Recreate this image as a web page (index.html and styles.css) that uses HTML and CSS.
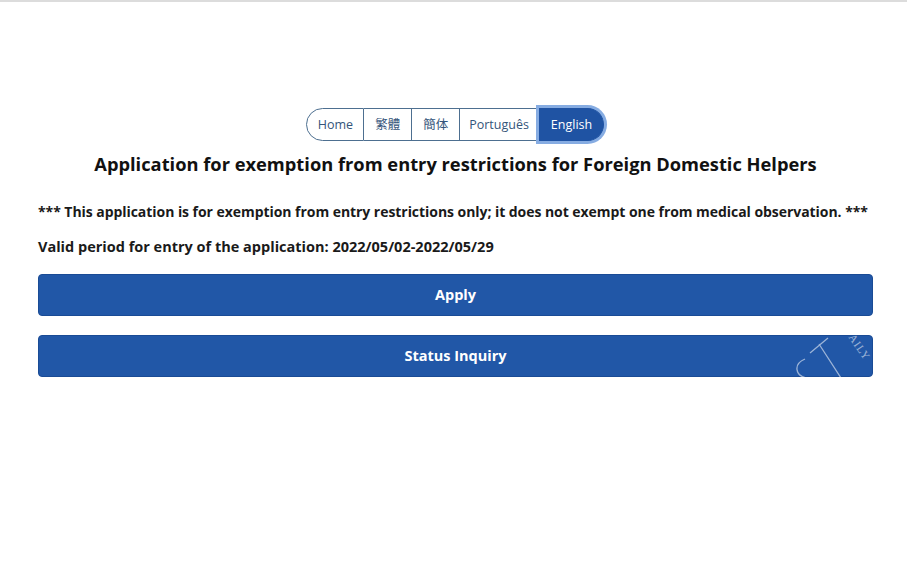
FILE: index.html
```html
<!DOCTYPE html>
<html lang="en">

<head>
    <meta charset="UTF-8">
    <meta name="viewport" content="width=device-width, initial-scale=1.0">
    <title>Application for exemption from entry restrictions for Foreign Domestic Helpers</title>
    <link rel="stylesheet" href="styles.css">
</head>

<body>
    <div class="page">
        <nav class="lang-bar">
            <a class="lang-btn home" href="#">Home</a>
            <a class="lang-btn" href="#">繁體</a>
            <a class="lang-btn" href="#">簡体</a>
            <a class="lang-btn pt" href="#">Português</a>
            <a class="lang-btn active" href="#">English</a>
        </nav>

        <h1 class="title">Application for exemption from entry restrictions for Foreign Domestic Helpers</h1>

        <p class="notice">*** This application is for exemption from entry restrictions only; it does not exempt one from medical observation. ***</p>
        <p class="notice period">Valid period for entry of the application: 2022/05/02-2022/05/29</p>

        <div class="actions">
            <a class="main-button" href="#">Apply</a>
            <a class="main-button" href="#">Status Inquiry</a>
            <!-- newspaper watermark over the second button -->
            <svg class="watermark" width="96" height="62" viewBox="0 0 96 62">
                <path d="M22 54 C 10 52, 8 40, 20 35" fill="none" stroke="#ffffff" stroke-width="1.3" />
                <path d="M34 20 L 56 54 M25 29 L 43 14" fill="none" stroke="#ffffff" stroke-width="1.3" />
                <text x="0" y="0" transform="translate(58 6) rotate(55)" font-size="11" fill="#ffffff" font-family="'Liberation Serif', serif" letter-spacing="1">DAILY</text>
            </svg>
        </div>
    </div>
</body>

</html>
```

FILE: styles.css
```css
body {
    margin: 0;
    font-family: 'Open Sans', 'Noto Sans CJK TC', sans-serif;
    color: #1a1a1a;
    background: #ffffff;
    border-top: 2px solid #dcdcdc;
}

.page {
    padding: 106px 34px 0 38px;
}

/* language switcher */
.lang-bar {
    display: flex;
    justify-content: center;
    margin-left: -1px;
}

.lang-btn {
    display: block;
    height: 31px;
    line-height: 31px;
    padding: 0 11px;
    font-size: 12.5px;
    color: #35557a;
    text-decoration: none;
    border: 1px solid #4d6f90;
    border-left: none;
}

.lang-btn.home {
    border-left: 1px solid #4d6f90;
    border-radius: 17px 0 0 17px;
    padding: 0 10px 0 11px;
}

.lang-btn.pt {
    padding: 0 9px;
}

.lang-btn.active {
    background-color: #1f53a3;
    color: #ffffff;
    border-color: #1f53a3;
    border-radius: 0 17px 17px 0;
    padding: 0 11px 0 12px;
    box-shadow: 0 0 0 3px #86ace2;
}

.title {
    font-size: 18.3px;
    font-weight: 700;
    text-align: center;
    margin: 10px 0 26px;
    color: #111111;
}

.notice {
    font-size: 14px;
    font-weight: 700;
    letter-spacing: -0.05px;
    white-space: nowrap;
    margin: 0 0 16px;
}

.notice.period {
    font-size: 14.5px;
    letter-spacing: 0;
}

.actions {
    position: relative;
    display: flex;
    flex-direction: column;
    gap: 19px;
    margin-top: 18px;
}

.main-button {
    display: block;
    height: 40px;
    line-height: 40px;
    text-align: center;
    font-size: 14.5px;
    font-weight: 700;
    color: #ffffff;
    text-decoration: none;
    background-color: #2157a7;
    border: 1px solid #1a4b95;
    border-radius: 4px;
}

.watermark {
    position: absolute;
    right: -8px;
    bottom: -9px;
    opacity: 0.55;
}
```
